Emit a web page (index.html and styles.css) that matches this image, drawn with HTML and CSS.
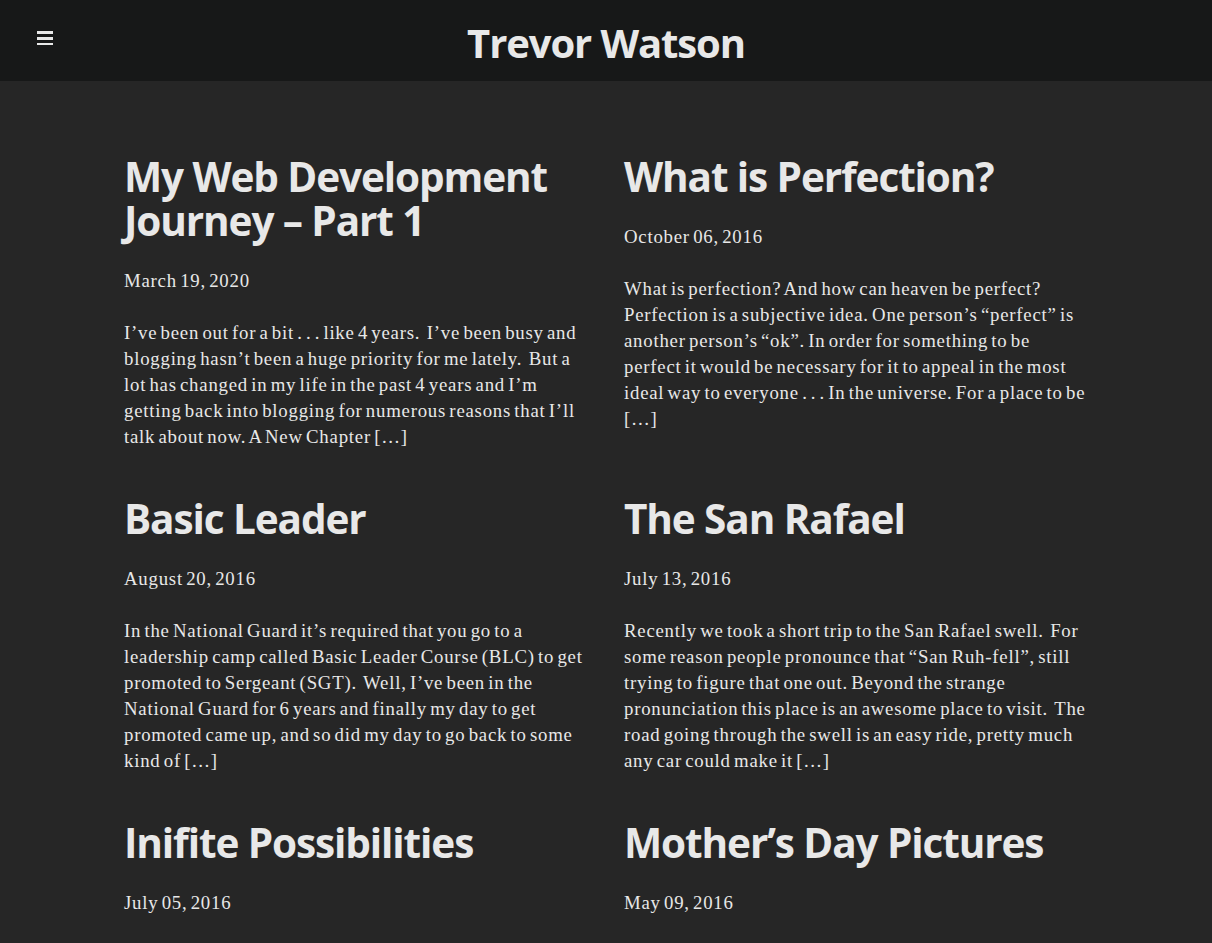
FILE: index.html
```html
<!DOCTYPE html>
<html lang="en">
<head>
<meta charset="utf-8">
<title>Trevor Watson</title>
<link rel="stylesheet" href="styles.css">
</head>
<body>
<header class="site-header">
  <button class="menu-toggle" aria-label="Menu">
    <svg width="16" height="15" viewBox="0 0 16 15"><rect x="0" y="1" width="16" height="3" fill="#e8e8e8"/><rect x="0" y="7" width="16" height="3" fill="#e8e8e8"/><rect x="0" y="13" width="16" height="3" fill="#e8e8e8"/></svg>
  </button>
  <h1 class="site-title">Trevor Watson</h1>
</header>
<main class="posts">
  <article class="post">
    <h2 class="post-title">My Web Development Journey – Part 1</h2>
    <p class="post-date">March 19, 2020</p>
    <p class="post-excerpt">I’ve been out for a bit . . . like 4 years.&nbsp; I’ve been busy and blogging hasn’t been a huge priority for me lately.&nbsp; But a lot has changed in my life in the past 4 years and I’m getting back into blogging for numerous reasons that I’ll talk about now. A New Chapter […]</p>
  </article>
  <article class="post">
    <h2 class="post-title">What is Perfection?</h2>
    <p class="post-date">October 06, 2016</p>
    <p class="post-excerpt">What is perfection? And how can heaven be perfect? Perfection is a subjective idea. One person’s “perfect” is another person’s “ok”. In order for something to be perfect it would be necessary for it to appeal in the most ideal way to everyone . . . In the universe. For a place to be […]</p>
  </article>
  <article class="post">
    <h2 class="post-title">Basic Leader</h2>
    <p class="post-date">August 20, 2016</p>
    <p class="post-excerpt">In the National Guard it’s required that you go to a leadership camp called Basic Leader Course (BLC) to get promoted to Sergeant (SGT).&nbsp; Well, I’ve been in the National Guard for 6 years and finally my day to get promoted came up, and so did my day to go back to some kind of […]</p>
  </article>
  <article class="post">
    <h2 class="post-title">The San Rafael</h2>
    <p class="post-date">July 13, 2016</p>
    <p class="post-excerpt">Recently we took a short trip to the San Rafael swell.&nbsp; For some reason people pronounce that “San Ruh-fell”, still trying to figure that one out. Beyond the strange pronunciation this place is an awesome place to visit.&nbsp; The road going through the swell is an easy ride, pretty much any car could make it […]</p>
  </article>
  <article class="post">
    <h2 class="post-title">Inifite Possibilities</h2>
    <p class="post-date">July 05, 2016</p>
    <p class="post-excerpt">Sometimes life gives you more options than you know what to do with. It seems like there are infinite possibilities out there.</p>
  </article>
  <article class="post">
    <h2 class="post-title">Mother’s Day Pictures</h2>
    <p class="post-date">May 09, 2016</p>
    <p class="post-excerpt">Here are some pictures from our Mother’s Day weekend with the family.</p>
  </article>
</main>
</body>
</html>
```

FILE: styles.css
```css
html, body {
  margin: 0;
  padding: 0;
}
body {
  background: #262626;
  color: #e8e8e8;
  font-family: "Liberation Serif", Georgia, serif;
}
.site-header {
  height: 81px;
  box-sizing: border-box;
  padding-top: 4px;
  background: #171818;
  display: flex;
  align-items: center;
  justify-content: center;
  position: relative;
}
.menu-toggle {
  position: absolute;
  left: 37px;
  top: 30px;
  padding: 0;
  border: 0;
  background: none;
  line-height: 0;
}
.site-title {
  margin: 0;
  font-family: "Open Sans", sans-serif;
  font-weight: 700;
  font-size: 40px;
  letter-spacing: -1.1px;
  line-height: 1;
}
.posts {
  width: 964px;
  margin: 0 auto;
  padding-top: 74px;
  display: grid;
  grid-template-columns: 1fr 1fr;
  column-gap: 36px;
  row-gap: 47px;
}
.post-title {
  margin: 0;
  font-family: "Open Sans", sans-serif;
  font-weight: 700;
  font-size: 40.5px;
  letter-spacing: -1.1px;
  line-height: 44px;
}
.post-date {
  margin: 25px 0 0;
  font-size: 18.8px;
  letter-spacing: 0.77px;
  word-spacing: -2.2px;
  line-height: 26px;
}
.post-excerpt {
  margin: 26px 0 0;
  font-size: 18.8px;
  letter-spacing: 0.77px;
  word-spacing: -2.2px;
  line-height: 26px;
}
```
